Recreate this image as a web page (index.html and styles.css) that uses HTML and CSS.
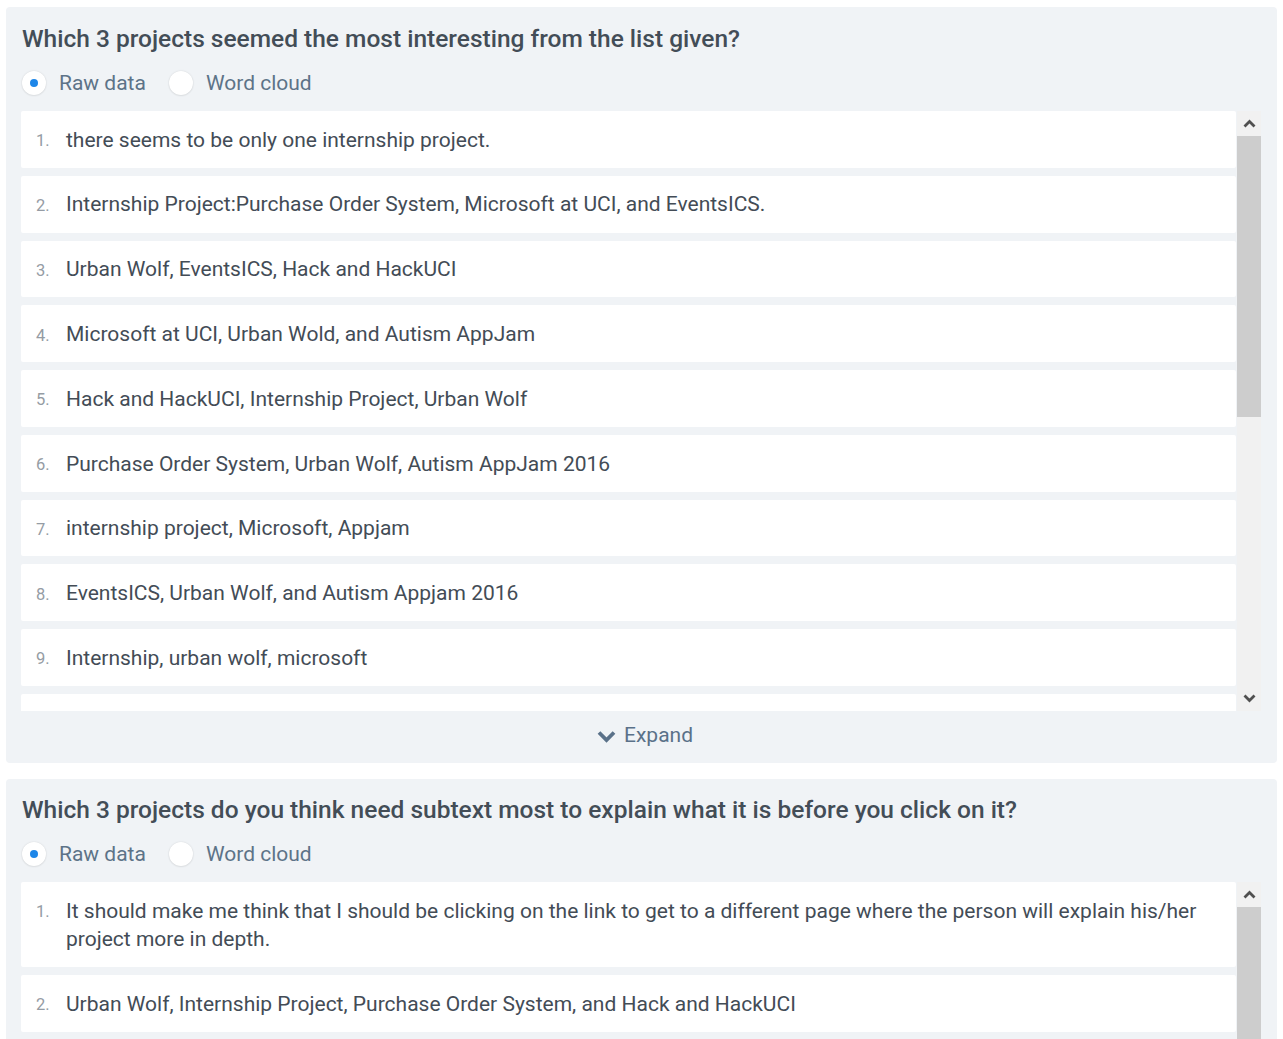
FILE: index.html
```html
<!DOCTYPE html>
<html>
<head>
<meta charset="utf-8">
<link rel="stylesheet" href="styles.css">
</head>
<body>
<section class="card">
  <h2 class="q-title">Which 3 projects seemed the most interesting from the list given?</h2>
  <div class="radios">
    <label class="radio"><span class="dot on"></span><span class="rlabel">Raw data</span></label>
    <label class="radio"><span class="dot"></span><span class="rlabel">Word cloud</span></label>
  </div>
  <div class="scroller">
    <ol class="answers">
      <li class="answer"><span class="num">1.</span><span class="txt">there seems to be only one internship project.</span></li>
      <li class="answer"><span class="num">2.</span><span class="txt">Internship Project:Purchase Order System, Microsoft at UCI, and EventsICS.</span></li>
      <li class="answer"><span class="num">3.</span><span class="txt">Urban Wolf, EventsICS, Hack and HackUCI</span></li>
      <li class="answer"><span class="num">4.</span><span class="txt">Microsoft at UCI, Urban Wold, and Autism AppJam</span></li>
      <li class="answer"><span class="num">5.</span><span class="txt">Hack and HackUCI, Internship Project, Urban Wolf</span></li>
      <li class="answer"><span class="num">6.</span><span class="txt">Purchase Order System, Urban Wolf, Autism AppJam 2016</span></li>
      <li class="answer"><span class="num">7.</span><span class="txt">internship project, Microsoft, Appjam</span></li>
      <li class="answer"><span class="num">8.</span><span class="txt">EventsICS, Urban Wolf, and Autism Appjam 2016</span></li>
      <li class="answer"><span class="num">9.</span><span class="txt">Internship, urban wolf, microsoft</span></li>
      <li class="answer"><span class="num">10.</span><span class="txt">Urban Wolf, Hack and HackUCI, Microsoft at UCI</span></li>
    </ol>
    <div class="sbar">
      <div class="sbtn"><svg width="13" height="9" viewBox="0 0 13 9"><path d="M1.5 7.5 L6.5 2.5 L11.5 7.5" fill="none" stroke="#505050" stroke-width="2.8"/></svg></div>
      <div class="strack"><div class="sthumb"></div></div>
      <div class="sbtn"><svg width="13" height="9" viewBox="0 0 13 9"><path d="M1.5 1.5 L6.5 6.5 L11.5 1.5" fill="none" stroke="#505050" stroke-width="2.8"/></svg></div>
    </div>
  </div>
  <div class="expand">
    <svg class="chev" width="19" height="13" viewBox="0 0 19 13"><path d="M2 2.5 L9.5 10 L17 2.5" fill="none" stroke="#5a7189" stroke-width="3.8"/></svg>
    <span>Expand</span>
  </div>
</section>

<section class="card">
  <h2 class="q-title">Which 3 projects do you think need subtext most to explain what it is before you click on it?</h2>
  <div class="radios">
    <label class="radio"><span class="dot on"></span><span class="rlabel">Raw data</span></label>
    <label class="radio"><span class="dot"></span><span class="rlabel">Word cloud</span></label>
  </div>
  <div class="scroller">
    <ol class="answers">
      <li class="answer"><span class="num">1.</span><span class="txt">It should make me think that I should be clicking on the link to get to a different page where the person will explain his/her project more in depth.</span></li>
      <li class="answer"><span class="num">2.</span><span class="txt">Urban Wolf, Internship Project, Purchase Order System, and Hack and HackUCI</span></li>
      <li class="answer"><span class="num">3.</span><span class="txt">Microsoft at UCI, Internship Project, EventsICS</span></li>
      <li class="answer"><span class="num">4.</span><span class="txt">Autism AppJam 2016, Hack and HackUCI, Urban Wolf</span></li>
    </ol>
    <div class="sbar">
      <div class="sbtn"><svg width="13" height="9" viewBox="0 0 13 9"><path d="M1.5 7.5 L6.5 2.5 L11.5 7.5" fill="none" stroke="#505050" stroke-width="2.8"/></svg></div>
      <div class="strack"><div class="sthumb"></div></div>
      <div class="sbtn"><svg width="13" height="9" viewBox="0 0 13 9"><path d="M1.5 1.5 L6.5 6.5 L11.5 1.5" fill="none" stroke="#505050" stroke-width="2.8"/></svg></div>
    </div>
  </div>
</section>
</body>
</html>
```

FILE: styles.css
```css
html, body {
  margin: 0;
  background: #ffffff;
}
body {
  padding: 7px 6px 0 6px;
  font-family: Roboto, "Liberation Sans", sans-serif;
  overflow: hidden;
  height: 1039px;
  box-sizing: border-box;
}
.card {
  background: #f0f3f6;
  border-radius: 4px;
  padding: 16px 16px 0 15px;
  margin-bottom: 16px;
}
.q-title {
  margin: 0;
  font-size: 24.5px;
  line-height: 30px;
  font-weight: 500;
  color: #434d57;
  padding-left: 1px;
  padding-top: 1px;
}
.card + .card .q-title {
  padding-top: 0;
  margin-bottom: 1px;
}
.radios {
  display: flex;
  align-items: center;
  gap: 22px;
  height: 30px;
  margin-top: 14px;
  margin-bottom: 13px;
}
.radio {
  display: flex;
  align-items: center;
  gap: 13px;
  padding-left: 1px;
}
.dot {
  width: 24px;
  height: 24px;
  border-radius: 50%;
  background: #ffffff;
  box-shadow: 0 0 2px rgba(0,0,0,0.12), 0 1px 2px rgba(0,0,0,0.06);
  display: flex;
  align-items: center;
  justify-content: center;
}
.dot.on::after {
  content: "";
  width: 8px;
  height: 8px;
  border-radius: 50%;
  background: #1d86e8;
}
.rlabel {
  font-size: 21px;
  color: #5d7388;
}
.scroller {
  display: flex;
  height: 600px;
  overflow: hidden;
}
.answers {
  flex: 1;
  list-style: none;
  margin: 0;
  padding: 0;
  display: flex;
  flex-direction: column;
  gap: 8px;
  overflow: hidden;
}
.answer {
  flex: none;
  background: #ffffff;
  border-radius: 2px;
  display: flex;
  align-items: flex-start;
  padding: 14.7px 30px 13.7px 15px;
  line-height: 28.4px;
}
.num {
  width: 30px;
  flex: none;
  font-size: 16.5px;
  color: #959ca4;
  margin-top: 1.5px;
  margin-bottom: -1.5px;
}
.txt {
  font-size: 21px;
  color: #434c56;
}
.sbar {
  width: 24px;
  flex: none;
  display: flex;
  flex-direction: column;
  background: #f1f1f1;
  margin-left: 1px;
}
.sbtn {
  height: 25px;
  flex: none;
  display: flex;
  align-items: center;
  justify-content: center;
}
.strack {
  flex: 1;
}
.sthumb {
  background: #cdcdcd;
  height: 281px;
}
.expand {
  height: 52px;
  box-sizing: border-box;
  padding-bottom: 4px;
  padding-left: 8px;
  display: flex;
  align-items: center;
  justify-content: center;
  gap: 8px;
  color: #5a7189;
  font-size: 21px;
}
.chev {
  margin-top: 2px;
}
```
